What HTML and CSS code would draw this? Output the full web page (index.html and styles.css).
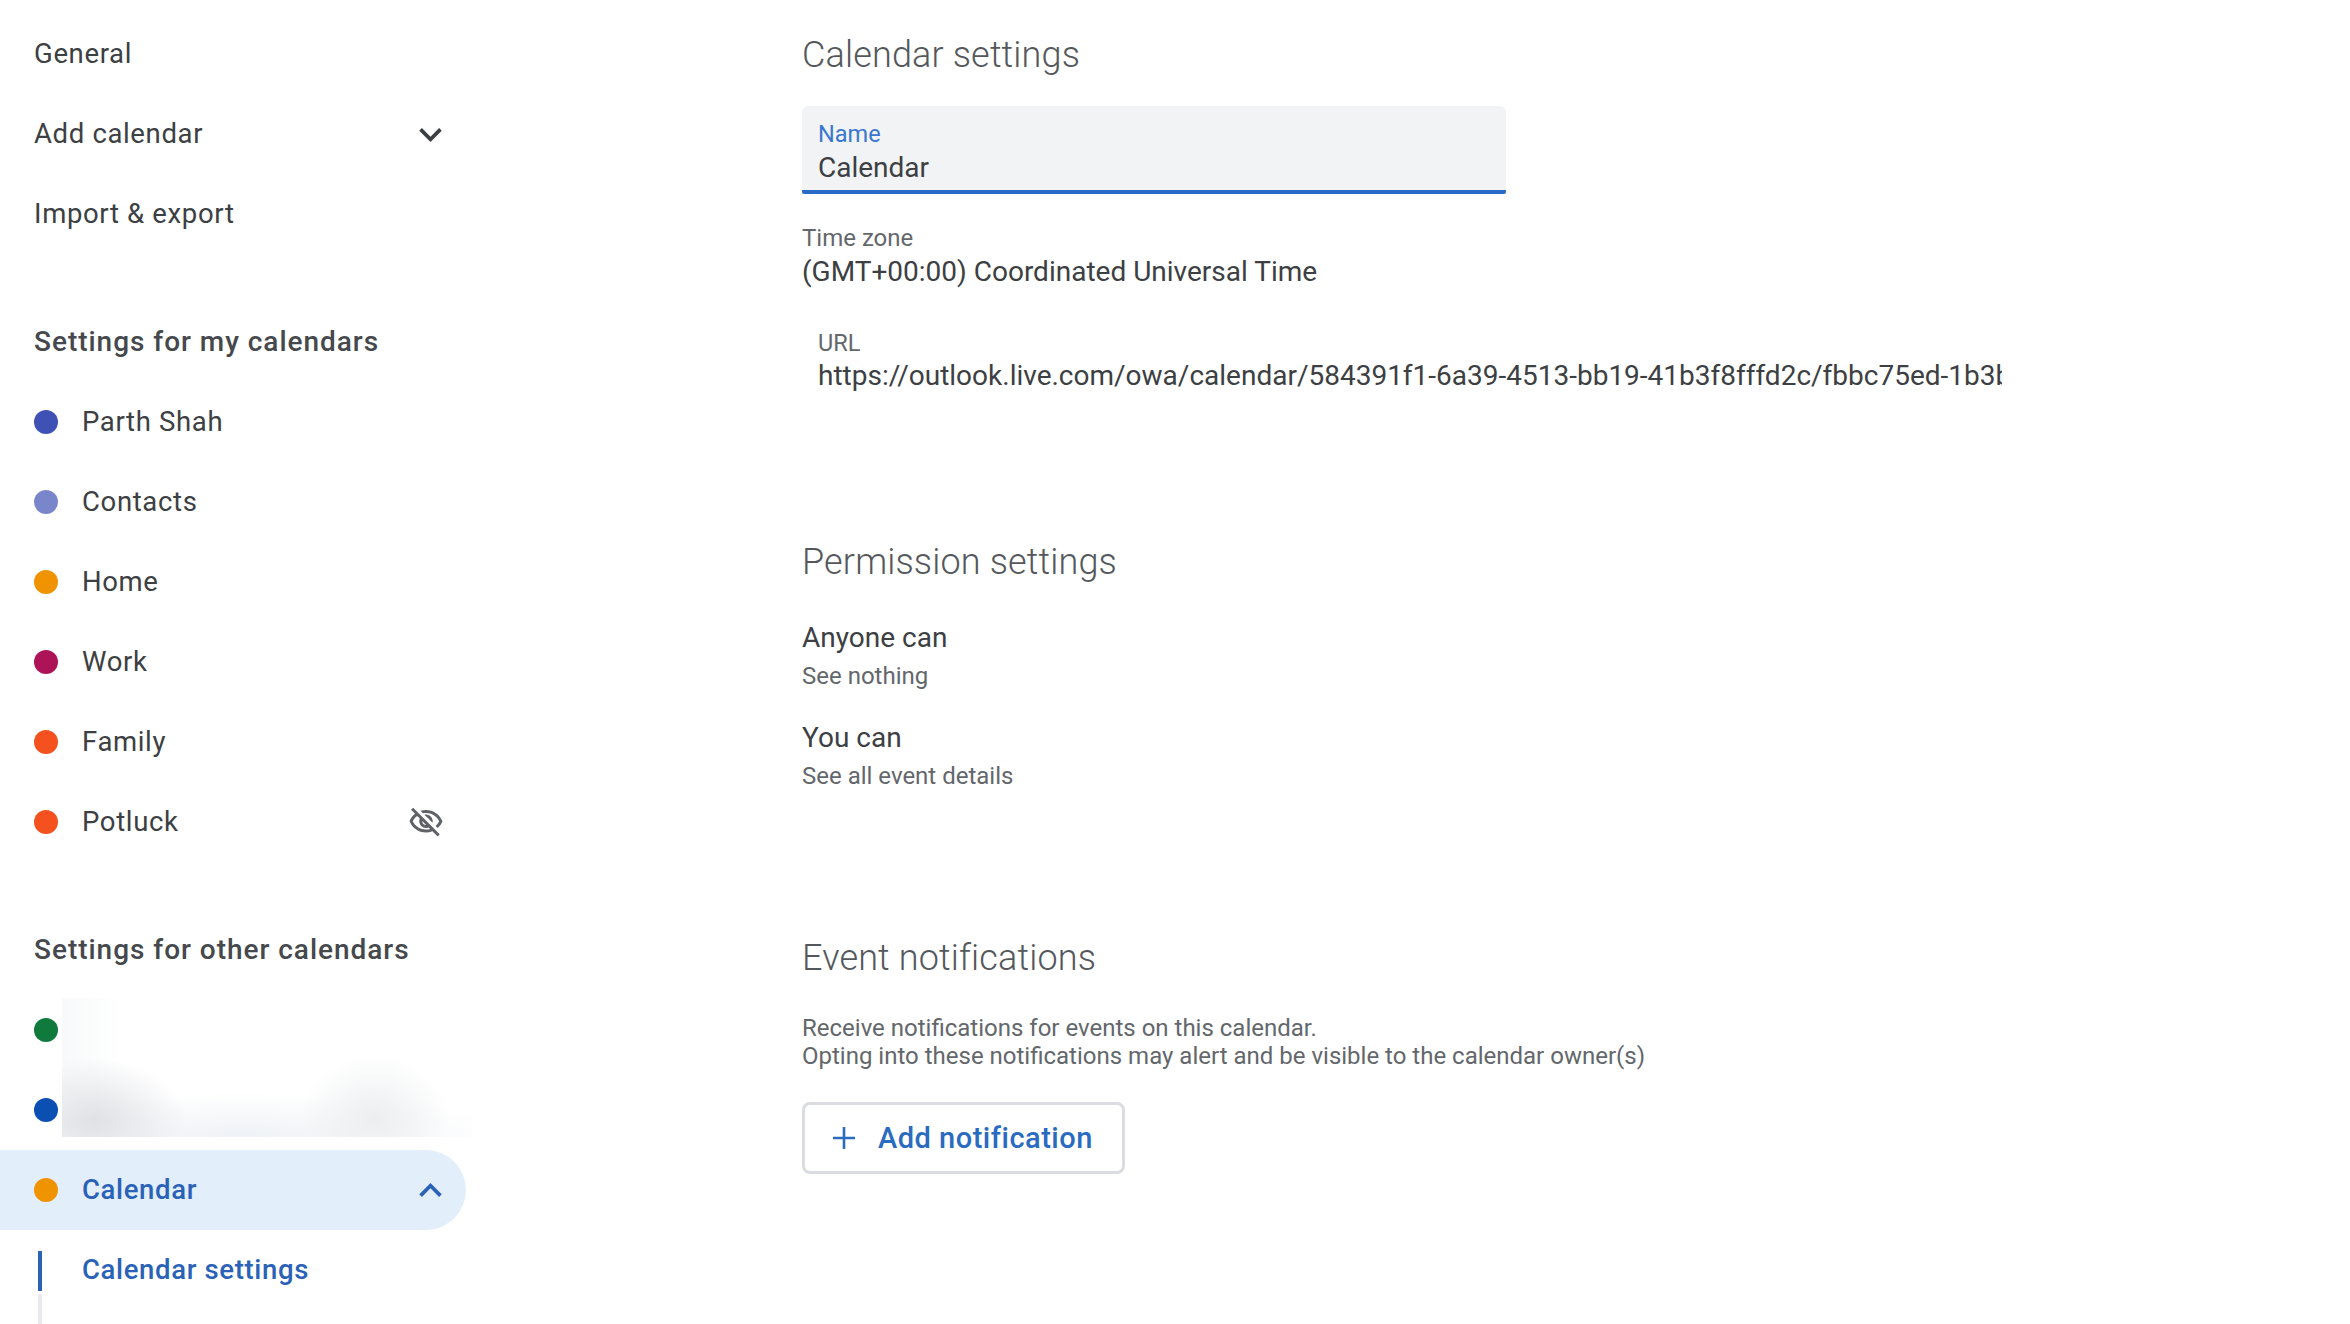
FILE: index.html
```html
<!DOCTYPE html>
<html lang="en">
<head>
<meta charset="utf-8">
<title>Calendar settings</title>
<link rel="stylesheet" href="styles.css">
</head>
<body>
<div class="page">
  <nav class="sidebar">
    <div class="row"><span class="label">General</span></div>
    <div class="row"><span class="label">Add calendar</span>
      <svg class="chev" viewBox="0 0 24 24"><path d="M7.41 8.59 12 13.17l4.59-4.58L18 10l-6 6-6-6z"/></svg></div>
    <div class="row"><span class="label">Import &amp; export</span></div>

    <h2 class="side-head">Settings for my calendars</h2>
    <div class="row"><span class="dot c-blue"></span><span class="label">Parth Shah</span></div>
    <div class="row"><span class="dot c-lav"></span><span class="label">Contacts</span></div>
    <div class="row"><span class="dot c-orange"></span><span class="label">Home</span></div>
    <div class="row"><span class="dot c-berry"></span><span class="label">Work</span></div>
    <div class="row"><span class="dot c-tang"></span><span class="label">Family</span></div>
    <div class="row"><span class="dot c-tang"></span><span class="label">Potluck</span>
      <svg class="eye" viewBox="0 0 24 24"><path d="M12 6c3.79 0 7.17 2.13 8.82 5.5-.59 1.22-1.42 2.27-2.41 3.12l1.41 1.41c1.39-1.23 2.49-2.77 3.18-4.53C21.27 7.11 17 4 12 4c-1.27 0-2.49.2-3.64.57l1.65 1.65C10.66 6.09 11.32 6 12 6zm-1.07 1.14L13 9.21c.57.25 1.03.71 1.28 1.28l2.07 2.07c.08-.34.14-.7.14-1.07C16.5 9.01 14.48 7 12 7c-.37 0-.72.05-1.07.14zM2.01 3.87l2.68 2.68C3.06 7.83 1.77 9.53 1 11.5 2.73 15.89 7 19 12 19c1.52 0 2.98-.29 4.32-.82l3.42 3.42 1.41-1.41L3.42 2.45 2.01 3.87zm7.5 7.5l2.61 2.61c-.04.01-.08.02-.12.02-1.38 0-2.5-1.12-2.5-2.5 0-.05.01-.08.01-.13zm-3.4-3.4l1.75 1.75c-.23.55-.36 1.15-.36 1.78 0 2.48 2.02 4.5 4.5 4.5.63 0 1.23-.13 1.77-.36l.98.98c-.88.24-1.8.38-2.75.38-3.79 0-7.17-2.13-8.82-5.5.7-1.43 1.72-2.61 2.93-3.53z"/></svg></div>

    <h2 class="side-head">Settings for other calendars</h2>
    <div class="others">
      <div class="row"><span class="dot c-green"></span></div>
      <div class="row"><span class="dot c-navy"></span></div>
      <div class="redact"></div>
    </div>
    <div class="row active"><span class="dot c-orange"></span><span class="label">Calendar</span>
      <svg class="chev" viewBox="0 0 24 24"><path d="M12 8l-6 6 1.41 1.41L12 10.83l4.59 4.58L18 14z"/></svg></div>
    <div class="subnav">
      <div class="sub-current">Calendar settings</div>
    </div>
  </nav>

  <main class="main">
    <section class="sec sec-general">
      <h1 class="title">Calendar settings</h1>
      <div class="field">
        <div class="field-label">Name</div>
        <div class="field-value">Calendar</div>
      </div>
      <div class="tz">
        <div class="cap">Time zone</div>
        <div class="val tz-val">(GMT+00:00) Coordinated Universal Time</div>
      </div>
      <div class="url">
        <div class="cap">URL</div>
        <div class="val url-val">https://outlook.live.com/owa/calendar/584391f1-6a39-4513-bb19-41b3f8fffd2c/fbbc75ed-1b3b1e5a7c9d4f2e8a6b0c3d7e9f1a2b</div>
      </div>
    </section>

    <section class="sec sec-perm">
      <h1 class="title">Permission settings</h1>
      <div class="perm first">
        <div class="val">Anyone can</div>
        <div class="sub">See nothing</div>
      </div>
      <div class="perm">
        <div class="val">You can</div>
        <div class="sub">See all event details</div>
      </div>
    </section>

    <section class="sec sec-notif">
      <h1 class="title">Event notifications</h1>
      <p class="note">Receive notifications for events on this calendar.<br>Opting into these notifications may alert and be visible to the calendar owner(s)</p>
      <button class="add" type="button">
        <svg class="plus" viewBox="0 0 24 24"><path d="M12 1v22M1 12h22"/></svg>
        <span>Add notification</span>
      </button>
    </section>
  </main>
</div>
</body>
</html>
```

FILE: styles.css
```css
* { box-sizing: border-box; }
html, body { margin: 0; height: 100%; background: #fff; overflow: hidden; }
body { font-family: Roboto, "Liberation Sans", sans-serif; color: #3c4043; }

.page { display: flex; height: 1324px; overflow: hidden; }

.sidebar { width: 466px; flex: none; padding-top: 14px; }
.row { height: 80px; display: flex; align-items: center; padding-left: 34px; position: relative; }
.label { font-size: 27.5px; letter-spacing: .65px; color: #3c4043; padding-bottom: 2px; }
.dot { width: 24px; height: 24px; border-radius: 50%; margin-right: 24px; flex: none; }
.c-blue { background: #3f51b5; }
.c-lav { background: #7986cb; }
.c-orange { background: #f09300; }
.c-berry { background: #ad1457; }
.c-tang { background: #f4511e; }
.c-green { background: #0f7a3c; }
.c-navy { background: #0b4fb3; }

.chev { position: absolute; left: 408px; top: 18px; width: 45px; height: 45px; fill: #3c4043; }
.eye { position: absolute; left: 408px; top: 22px; width: 36px; height: 36px; fill: #5f6368; }

.side-head { margin: 48px 0 0; height: 80px; line-height: 80px; padding-left: 34px; font-size: 28px; font-weight: 500; letter-spacing: .97px; color: #45484c; }

.others { position: relative; }
.redact {
  position: absolute; left: 62px; top: 8px; width: 410px; height: 139px;
  background:
    radial-gradient(ellipse 90px 62px at 33px 122px, #dfe1e5 0%, rgba(223,225,229,0) 100%),
    radial-gradient(ellipse 75px 62px at 313px 120px, #eceef0 0%, rgba(236,238,240,0) 100%),
    radial-gradient(ellipse 270px 44px at 180px 139px, #eff2f6 0%, rgba(239,242,246,0) 100%),
    linear-gradient(90deg, #f8f9fa 0, rgba(248,249,250,0) 60px);
}

.active { background: #e3eefb; width: 466px; border-radius: 0 40px 40px 0; }
.active .label { color: #2a62b8; font-weight: 500; }
.active .chev { fill: #2a62b8; }

.subnav { height: 95px; position: relative; }
.subnav::before { content: ""; position: absolute; left: 38px; top: 21px; width: 4px; height: 40px; background: #2a62b8; }
.subnav::after { content: ""; position: absolute; left: 38px; top: 64px; width: 4px; bottom: 0; background: #e8eaed; }
.sub-current {
  height: 80px; padding-left: 82px;
  font-size: 27.5px; font-weight: 500; letter-spacing: .65px; line-height: 80px; color: #2a62b8; white-space: nowrap;
}

.main { flex: 1; padding-left: 336px; padding-top: 15px; min-width: 0; }
.title { margin: 0; height: 80px; line-height: 80px; font-size: 36px; font-weight: 300; letter-spacing: .15px; color: #54585c; }

.field { width: 704px; height: 88px; margin-top: 11px; padding: 14px 16px 0; background: #f1f3f4; border-bottom: 4px solid #2a6bc9; border-radius: 6px 6px 2px 2px; }
.field-label { font-size: 23.5px; line-height: 28px; color: #3a77d0; }
.field-value { font-size: 28px; line-height: 38px; color: #3c4043; padding-top: 1px; }

.tz { margin-top: 30px; }
.cap { font-size: 24px; line-height: 28px; color: #63676c; }
.val { font-size: 28px; line-height: 38px; color: #3c4043; }
.tz-val { padding-top: 1px; }
.url { margin-top: 38px; padding-left: 16px; width: 1200px; }
.url .cap { font-size: 23.5px; }
.url-val { white-space: nowrap; overflow: hidden; width: 1184px; }

.sec-perm { margin-top: 127px; }
.perm.first { margin-top: 17px; }
.perm { margin-top: 24px; }
.sub { font-size: 24px; line-height: 38px; color: #63676c; }

.sec-notif { margin-top: 123px; }
.note { margin: 16px 0 0; font-size: 24px; line-height: 28px; color: #63676c; }
.add { display: flex; align-items: center; width: 323px; height: 72px; margin-top: 32px; padding: 0 0 0 27px; background: #fff; border: 3px solid #dadce0; border-radius: 8px; color: #2a6bc0; font-family: inherit; font-size: 29px; font-weight: 500; letter-spacing: .5px; }
.plus { width: 24px; height: 24px; margin-right: 22px; stroke: #2a6bc0; stroke-width: 2.6; fill: none; flex: none; }
```
